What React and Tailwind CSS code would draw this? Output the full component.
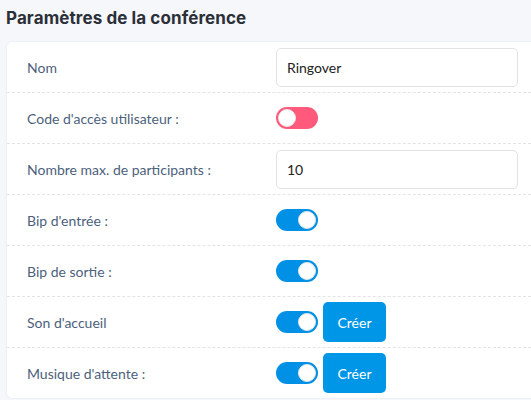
import React from 'react';

const rows = [
  { label: 'Nom', type: 'input', value: 'Ringover' },
  { label: "Code d'accès utilisateur :", type: 'toggle', on: false },
  { label: 'Nombre max. de participants :', type: 'input', value: '10' },
  { label: "Bip d'entrée :", type: 'toggle', on: true },
  { label: 'Bip de sortie :', type: 'toggle', on: true },
  { label: "Son d'accueil", type: 'toggle', on: true, button: true },
  { label: "Musique d'attente :", type: 'toggle', on: true, button: true },
];

function Toggle({ on }) {
  return (
    <div
      className={`flex h-[22px] w-[42px] items-center rounded-full px-[2px] ${
        on ? 'justify-end bg-[#0091e6]' : 'justify-start bg-[#ff5a7b]'
      }`}
    >
      <div className="h-[18px] w-[18px] rounded-full border border-[#e6e6e6] bg-white" />
    </div>
  );
}

export default function App() {
  return (
    <div className="min-h-[400px] bg-[#f6f7fa] pl-[6px] font-['Lato',sans-serif]">
      <h2 className="pt-[4px] h-[41px] font-['Inter',sans-serif] text-[17px] font-bold leading-[28px] tracking-[0.1px] text-[#2b2f38]">
        Paramètres de la conférence
      </h2>
      <div className="rounded-tl-[6px] rounded-bl-[6px] border border-r-0 border-[#eef0f5] bg-white">
        {rows.map((row, i) => (
          <div
            key={i}
            className={`flex items-center ${i === 0 ? 'h-[50px]' : 'h-[51px] border-t border-dashed border-[#e2e4e8]'}`}
          >
            <div className="w-[269px] pl-[20px] text-[14px] text-[#4c5f7c]">{row.label}</div>
            {row.type === 'input' ? (
              <div className="flex h-[39px] w-[242px] items-center rounded-[5px] border border-[#e2e2e2] px-[10px] text-[14px] text-[#222]">
                {row.value}
              </div>
            ) : (
              <div className="flex items-center gap-[5px]">
                <Toggle on={row.on} />
                {row.button && (
                  <button className="h-[40px] w-[63px] rounded-[5px] bg-[#0096e8] text-[14px] text-white">
                    Créer
                  </button>
                )}
              </div>
            )}
          </div>
        ))}
      </div>
    </div>
  );
}
